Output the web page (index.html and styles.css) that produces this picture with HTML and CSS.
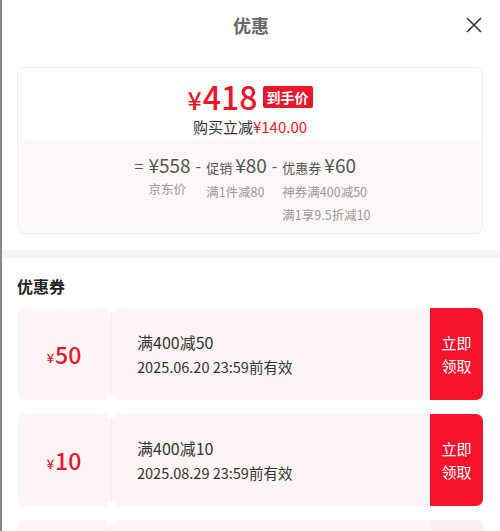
FILE: index.html
```html
<!DOCTYPE html>
<html lang="zh-CN">
<head>
    <meta charset="UTF-8">
    <meta name="viewport" content="width=device-width, initial-scale=1.0">
    <title>优惠</title>
    <link rel="stylesheet" href="styles.css">
</head>
<body>

    <div class="header">
        <h1 class="title">优惠</h1>
        <svg class="close" width="16" height="16" viewBox="0 0 16 16">
            <path d="M1 1 L15 15 M15 1 L1 15" stroke="#333" stroke-width="1.6" fill="none"/>
        </svg>
    </div>

    <div class="sheet">
        <div class="summary">
            <div class="summary-top">
                <div class="final">
                    <span class="final-price"><span class="yen">¥</span>418</span>
                    <span class="badge">到手价</span>
                </div>
                <div class="saved">购买立减<span class="red">¥140.00</span></div>
            </div>
            <div class="summary-bottom">
                <div class="formula">
                    <span class="op">=</span>
                    <div class="part">
                        <div class="amount">¥558</div>
                        <div class="note">京东价</div>
                    </div>
                    <span class="op">-</span>
                    <div class="part">
                        <div class="amount"><span class="label">促销</span>¥80</div>
                        <div class="note">满1件减80</div>
                    </div>
                    <span class="op">-</span>
                    <div class="part">
                        <div class="amount"><span class="label">优惠券</span>¥60</div>
                        <div class="note">神券满400减50</div>
                        <div class="note">满1享9.5折减10</div>
                    </div>
                </div>
            </div>
        </div>
    </div>

    <div class="divider"></div>

    <div class="sheet">
        <h2 class="section-title">优惠券</h2>

        <div class="coupon">
            <div class="stub"><span class="small-yen">¥</span>50</div>
            <div class="info">
                <div class="rule">满400减50</div>
                <div class="expire">2025.06.20 23:59前有效</div>
            </div>
            <div class="get">立即<br>领取</div>
        </div>

        <div class="coupon">
            <div class="stub"><span class="small-yen">¥</span>10</div>
            <div class="info">
                <div class="rule">满400减10</div>
                <div class="expire">2025.08.29 23:59前有效</div>
            </div>
            <div class="get">立即<br>领取</div>
        </div>

        <div class="coupon">
            <div class="stub"></div>
            <div class="info"></div>
            <div class="get get-faded"></div>
        </div>
    </div>

</body>
</html>
```

FILE: styles.css
```css
body {
    font-family: "Noto Sans CJK SC", "Noto Sans", sans-serif;
    color: #333;
    background-color: #fff;
    margin: 0;
    border-left: 2px solid #8a8a8a;
    height: 531px;
    overflow: hidden;
    box-sizing: border-box;
}
.header {
    position: relative;
    height: 50px;
    display: flex;
    align-items: center;
    justify-content: center;
}
.title {
    margin: 0;
    font-size: 18px;
    font-weight: bold;
    color: #666;
}
.close {
    position: absolute;
    right: 18px;
    top: 17px;
}
.sheet {
    padding: 0 17px 0 15px;
}
.summary {
    margin-top: 17px;
    border: 1px solid #eee;
    border-radius: 7px;
    overflow: hidden;
}
.summary-top {
    height: 73px;
    display: flex;
    flex-direction: column;
    align-items: center;
    padding-top: 14px;
    box-sizing: border-box;
}
.final {
    display: flex;
    align-items: center;
    height: 30px;
}
.final-price {
    color: #e8172c;
    font-size: 32px;
    font-weight: 500;
    line-height: 30px;
}
.yen {
    font-size: 25px;
    margin-right: 1px;
}
.badge {
    background-color: #e8172c;
    color: #fff;
    font-size: 14px;
    font-weight: bold;
    border-radius: 2px;
    padding: 0 4px;
    margin-left: 5px;
    height: 22px;
    line-height: 22px;
}
.saved {
    font-size: 15px;
    line-height: 18px;
    margin-top: 6px;
    color: #333;
}
.red {
    color: #e8172c;
}
.summary-bottom {
    background-color: #fdf7f7;
    height: 92px;
    padding-top: 12px;
    box-sizing: border-box;
}
.formula {
    display: flex;
    justify-content: center;
    color: #555;
}
.op {
    font-size: 16px;
    line-height: 24px;
    margin: 0 5px;
}
.amount {
    font-size: 19px;
    line-height: 24px;
}
.label {
    font-size: 13px;
    margin-right: 3px;
}
.note {
    font-size: 12.5px;
    color: #999;
    line-height: 23px;
}
.divider {
    margin-top: 16px;
    height: 8px;
    background-color: #f5f6fa;
}
.section-title {
    margin: 17px 0 11px;
    font-size: 16px;
    font-weight: bold;
    color: #222;
    line-height: 22px;
}
.coupon {
    position: relative;
    display: flex;
    height: 92px;
    margin-bottom: 14px;
    background-color: #fdf4f5;
    border-radius: 7px;
}
.coupon::before,
.coupon::after {
    content: "";
    position: absolute;
    left: 90px;
    width: 10px;
    height: 10px;
    border-radius: 50%;
    background-color: #fff;
}
.coupon::before {
    top: -5px;
}
.coupon::after {
    bottom: -5px;
}
.stub {
    width: 95px;
    border-right: 1px solid #f6e9ea;
    display: flex;
    align-items: center;
    justify-content: center;
    box-sizing: border-box;
    color: #e8172c;
    font-size: 23px;
    font-weight: 500;
}
.small-yen {
    font-size: 13px;
    margin-right: 1px;
    padding-top: 6px;
}
.info {
    flex: 1;
    padding: 22px 0 0 25px;
}
.rule {
    font-size: 16px;
    line-height: 24px;
}
.expire {
    font-size: 14.5px;
    line-height: 24px;
    margin-top: 1px;
}
.get {
    width: 53px;
    background-color: #f7132b;
    color: #fff;
    border-radius: 0 7px 7px 0;
    font-size: 15px;
    line-height: 23px;
    display: flex;
    align-items: center;
    justify-content: center;
    text-align: center;
}
.get-faded {
    background-color: #fdeef0;
}
```
